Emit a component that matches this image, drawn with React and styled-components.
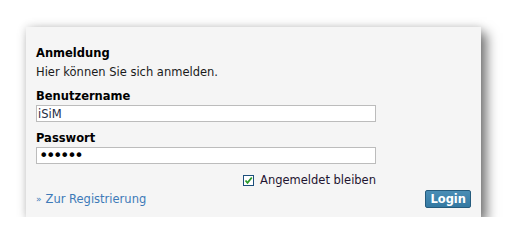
import React from "react";
import styled, { createGlobalStyle } from "styled-components";

const Global = createGlobalStyle`
  html, body { margin: 0; padding: 0; background: #ffffff; }
  body { font-family: "DejaVu Sans", Verdana, sans-serif; }
`;

const Page = styled.div`
  padding: 27px 0 0 26px;
`;

const Panel = styled.form`
  width: 455px;
  height: 190px;
  box-sizing: border-box;
  background: #f5f5f5;
  padding: 19px 10px 8px 10px;
  box-shadow: 6px 6px 11px rgba(0, 0, 0, 0.5), 0 0 9px rgba(0, 0, 0, 0.15);
  font-size: 11.5px;
  line-height: 14px;
  color: #1a1a1a;
  display: flex;
  flex-direction: column;
`;

const Title = styled.div`
  font-weight: bold;
  color: #000;
`;

const Desc = styled.div`
  margin-top: 5px;
`;

const Field = styled.div`
  display: flex;
  flex-direction: column;
  gap: 2px;
  margin-top: ${(p) => p.$top}px;
  width: 340px;
`;

const Label = styled.label`
  font-weight: bold;
  color: #000;
`;

const Input = styled.input`
  box-sizing: border-box;
  width: 340px;
  height: 17px;
  margin: 0;
  padding: 0 1px;
  border: 1px solid #bcbcbc;
  background: #fff;
  font-family: "DejaVu Sans", Verdana, sans-serif;
  font-size: 11.5px;
  color: #1e2c44;
  outline: none;
`;

const PasswordInput = styled(Input)`
  font-size: 16px;
  letter-spacing: -2.4px;
  color: #000;
  padding: 0 2px;
`;

const RememberRow = styled.label`
  width: 340px;
  margin-top: 9px;
  display: flex;
  justify-content: flex-end;
  align-items: center;
  gap: 6px;
  color: #1e1430;
`;

const Check = styled.span`
  width: 11px;
  height: 11px;
  box-sizing: border-box;
  border: 1px solid #1c4f7c;
  background: #fff;
  display: flex;
  align-items: center;
  justify-content: center;
`;

const Footer = styled.div`
  margin-top: 3px;
  display: flex;
  justify-content: space-between;
  align-items: center;
`;

const Link = styled.a`
  color: #3d7ab8;
  text-decoration: none;
  display: flex;
  align-items: center;
  gap: 4px;
`;

const Raquo = styled.span`
  font-size: 9px;
`;

const Button = styled.button`
  height: 18px;
  padding: 0 4px;
  margin: 0;
  box-sizing: border-box;
  border: 1px solid #255b7d;
  border-radius: 2px;
  background: linear-gradient(#4a8db5, #3479a2);
  color: #fff;
  font-family: "DejaVu Sans", Verdana, sans-serif;
  font-size: 11.5px;
  font-weight: bold;
  line-height: 14px;
`;

export default function App() {
  return (
    <>
      <Global />
      <Page>
        <Panel onSubmit={(e) => e.preventDefault()}>
          <Title>Anmeldung</Title>
          <Desc>Hier können Sie sich anmelden.</Desc>
          <Field $top={10}>
            <Label htmlFor="user">Benutzername</Label>
            <Input id="user" type="text" defaultValue="iSiM" />
          </Field>
          <Field $top={9}>
            <Label htmlFor="pass">Passwort</Label>
            <PasswordInput id="pass" type="password" defaultValue="123456" />
          </Field>
          <RememberRow>
            <Check>
              <svg width="9" height="9" viewBox="0 0 9 9">
                <path d="M1.5 4.5 L3.5 6.8 L7.8 1.5" fill="none" stroke="#2a9a2a" strokeWidth="1.8" />
              </svg>
            </Check>
            Angemeldet bleiben
          </RememberRow>
          <Footer>
            <Link href="#">
              <Raquo>»</Raquo>Zur Registrierung
            </Link>
            <Button type="submit">Login</Button>
          </Footer>
        </Panel>
      </Page>
    </>
  );
}
